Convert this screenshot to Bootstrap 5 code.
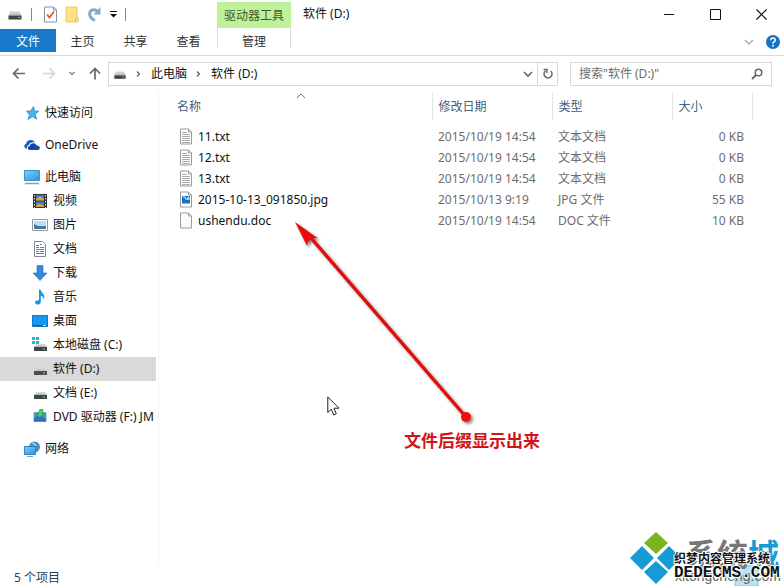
<!DOCTYPE html>
<html lang="zh-CN">
<head>
<meta charset="utf-8">
<meta name="viewport" content="width=device-width, initial-scale=1">
<title>软件 (D:)</title>
<link href="https://cdn.jsdelivr.net/npm/bootstrap@5.3.0/dist/css/bootstrap.min.css" rel="stylesheet">
<style>
body { font: 12px/20px "Noto Sans", "Noto Sans CJK SC", sans-serif; color: #111; background: #fff; }
svg { display: block; flex: none; }
button { border: 0; background: none; padding: 0; color: inherit; }
a { color: inherit; text-decoration: none; }
.titlebar { height: 28px; }
.quickbar { width: 217px; padding-left: 7px; }
.quickbar .sep { width: 1px; height: 13px; background: #888; }
.tool-head { width: 74px; background: #bff09a; color: #3f5b2c; margin-top: 2px; line-height: 28px; }
.win-btn { width: 46px; height: 28px; }
.ribbon { height: 28px; border-bottom: 1px solid #d9dadb; }
.ribbon a { height: 24px; line-height: 28px; width: 53px; text-align: center; color: #333; }
.ribbon .file-tab { width: 56px; height: 23px; margin-top: 1px; line-height: 25px; background: #1979ca; color: #fff; }
.ribbon .tool-tab { width: 74px; margin-left: 2px; height: 20px; border: solid #dcdcdc; border-width: 0 1px; }
.addressbar { padding: 6px 12px 0 12px; }
.nav-keys { width: 96px; gap: 12px; }
.path-box, .search-box { height: 24px; border: 1px solid #d9d9d9; }
.search-box { width: 202px; margin-left: 12px; padding: 0 8px; }
.search-box input { border: 0; outline: 0; width: 100%; min-width: 0; padding: 0; color: #6d6d6d; background: none; }
.search-box input::placeholder { color: #6d6d6d; opacity: 1; }
.refresh { width: 20px; height: 22px; border-left: 1px solid #d9d9d9; }
.tree { width: 159px; padding-top: 9px; margin-top: 6px; border-right: 1px solid #f3f3f3; }
.tree a { height: 24px; margin-right: 2px; padding-left: 32px; gap: 5px; white-space: nowrap; overflow: hidden; }
.tree a.top-node { padding-left: 24px; gap: 5px; }
.tree a.top-node + a.top-node, .tree a.spaced { margin-top: 8px; }
.tree a.current { background: #d9d9d9; }
.files { table-layout: fixed; width: 100%; margin-top: 7px; }
.files th { font-weight: 400; color: #43607c; height: 27px; padding: 0 0 0 6px; border-right: 1px solid #e4e4e4; position: relative; }
.files th:last-child { border: 0; }
.files th:first-child { padding-left: 18px; }
.files td { height: 21px; padding: 0 0 0 6px; color: #6d6d6d; white-space: nowrap; line-height: 21px; }
.files td:first-child { color: #111; padding-left: 20px; }
.files tbody::before { content: ""; display: block; height: 6px; }
.files .file-name { display: flex; align-items: center; gap: 5px; }
.files .num { text-align: right; padding-right: 8px; }
.sort-mark { position: absolute; left: 137px; top: 0; }
.note-arrow { position: absolute; left: 127px; top: 125px; }
.note { position: absolute; left: 245px; top: 343px; font-size: 17px; line-height: 24px; font-weight: 700; color: #d0141a; }
.pointer { position: absolute; left: 168px; top: 310px; }
.status { height: 21px; padding-left: 14px; color: #2b3f5c; line-height: 21px; }
.brand-mark { position: absolute; right: 2px; bottom: 2px; width: 152px; height: 54px; }
</style>
<script src="https://cdn.jsdelivr.net/npm/bootstrap@5.3.0/dist/js/bootstrap.bundle.min.js"></script>
</head>
<body>
<svg width="0" height="0" class="position-absolute" aria-hidden="true">
  <defs>
    <linearGradient id="lidG" x2="0" y2="1"><stop stop-color="#e2e2e2"/><stop offset="1" stop-color="#b5b5b5"/></linearGradient>
    <linearGradient id="skyG" x2="1" y2="1"><stop stop-color="#7fd0fa"/><stop offset="1" stop-color="#2795dd"/></linearGradient>
    <symbol id="drive" viewBox="0 0 16 16"><path d="M3.500 5h9l2 4.500h-13z" fill="url(#lidG)"/><path d="M1.500 9.500h13v4h-13z" fill="#3e4545"/><path d="M11 11h2v1h-2z" fill="#5fe08a"/></symbol>
    <symbol id="txt" viewBox="0 0 14 17"><path d="M1.500 1h8l3 3v12h-11z" fill="#fff" stroke="#9b9b9b"/><path d="M9.500 1v3h3" fill="none" stroke="#9b9b9b"/><path d="M3 4.500h5M3 6.500h8M3 8.500h8M3 10.500h8M3 12.500h8M3 14.500h8" stroke="#aaa"/></symbol>
    <symbol id="chev" viewBox="0 0 8 8"><path d="M2 1.500l2.500 2.500L2 6.500" fill="none" stroke="#666" stroke-width="1.300"/></symbol>
  </defs>
</svg>
<div class="d-flex flex-column vh-100 position-relative overflow-hidden">
  <header>
    <div class="titlebar d-flex">
      <div class="quickbar d-flex align-items-center">
        <svg width="16" height="16"><use href="#drive"/></svg>
        <span class="sep ms-2"></span>
        <button type="button" class="ms-2 ps-1" aria-label="属性"><svg width="13" height="17" viewBox="0 0 13 17"><path d="M.5 1h9l3 3v12H.5z" fill="#fff" stroke="#8292a8"/><path d="M9.500 1v3h3" fill="none" stroke="#8292a8"/><path d="M3 8.500l2.500 3 4.500-6" fill="none" stroke="#e2582e" stroke-width="1.800"/></svg></button>
        <button type="button" class="ms-2" aria-label="新建文件夹"><svg width="14" height="17" viewBox="0 0 14 17"><path d="M1 1h11v10h1v5H1z" fill="#ffe18a" stroke="#efc95d"/><path d="M10.500 12v4" stroke="#e3b848"/></svg></button>
        <button type="button" class="ms-2" aria-label="恢复"><svg width="15" height="16" viewBox="0 0 15 16"><path d="M8 14.500C3.500 12.500 1.500 9 3 6c1.500-3 5-3 8-.5" fill="none" stroke="#8ba5c4" stroke-width="3"/><path d="M13.500 1v7.500H6.500z" fill="#8ba5c4"/></svg></button>
        <button type="button" class="ms-2" aria-label="自定义"><svg width="7" height="8" viewBox="0 0 7 8"><path d="M0 1.500h7" stroke="#111"/><path d="M0 4h7L3.500 7.500z" fill="#111"/></svg></button>
        <span class="sep ms-2"></span>
      </div>
      <div class="tool-head text-center">驱动器工具</div>
      <div class="flex-fill pt-1 ps-2 ms-1">软件 (D:)</div>
      <button type="button" class="win-btn" aria-label="最小化"><svg class="mx-auto" width="10" height="11"><path d="M0 5.500h10" stroke="#111"/></svg></button>
      <button type="button" class="win-btn" aria-label="最大化"><svg class="mx-auto" width="11" height="11"><path d="M.5.500h10v10H.5z" fill="none" stroke="#111"/></svg></button>
      <button type="button" class="win-btn" aria-label="关闭"><svg class="mx-auto" width="11" height="11"><path d="M.5.500l10 10M10.500.5l-10 10" stroke="#111" stroke-width="1.200"/></svg></button>
    </div>
    <nav class="ribbon d-flex" aria-label="功能区">
      <a href="#" class="file-tab">文件</a>
      <a href="#">主页</a>
      <a href="#">共享</a>
      <a href="#">查看</a>
      <a href="#" class="tool-tab">管理</a>
      <div class="ms-auto me-1 d-flex align-items-center gap-2">
        <button type="button" aria-label="展开功能区"><svg width="10" height="8" viewBox="0 0 10 8"><path d="M1 2l4 4 4-4" fill="none" stroke="#aaa" stroke-width="1.300"/></svg></button>
        <button type="button" class="ms-1" aria-label="帮助"><svg width="14" height="14" viewBox="0 0 14 14"><circle cx="7" cy="7" r="7" fill="#1671c4"/><path d="M4.800 5.300c0-3 4.500-2.800 4.500-.3C9.300 6.700 7 6.600 7 8.800" fill="none" stroke="#fff" stroke-width="1.500"/><circle cx="7" cy="10.800" r="1" fill="#fff"/></svg></button>
      </div>
    </nav>
  </header>
  <div class="addressbar d-flex">
    <div class="nav-keys d-flex align-items-center">
      <button type="button" aria-label="后退"><svg width="14" height="14" viewBox="0 0 14 14"><path d="M13 6.500H2M6.500 1.500l-5 5 5 5" fill="none" stroke="#666" stroke-width="1.700"/></svg></button>
      <button type="button" class="ms-1" aria-label="前进"><svg width="14" height="14" viewBox="0 0 14 14"><path d="M1 6.500h11M7.500 1.500l5 5-5 5" fill="none" stroke="#d4d4d4" stroke-width="1.500"/></svg></button>
      <button type="button" aria-label="最近位置"><svg width="8" height="8" viewBox="0 0 8 8"><path d="M1.500 2l2.500 2.500L6.500 2" fill="none" stroke="#888" stroke-width="1.500"/></svg></button>
      <button type="button" aria-label="上移"><svg width="14" height="14" viewBox="0 0 14 14"><path d="M7 12.500V2M2 6.500l5-5 5 5" fill="none" stroke="#666" stroke-width="1.700"/></svg></button>
    </div>
    <div class="path-box d-flex align-items-center flex-fill ps-1">
      <svg width="14" height="16"><use href="#drive"/></svg>
      <svg class="mx-2" width="8" height="8"><use href="#chev"/></svg>
      <a href="#">此电脑</a>
      <svg class="mx-2" width="8" height="8"><use href="#chev"/></svg>
      <a href="#">软件 (D:)</a>
      <button type="button" class="ms-auto me-1" aria-label="以前的位置"><svg width="10" height="8" viewBox="0 0 10 8"><path d="M1 2l4 4 4-4" fill="none" stroke="#666" stroke-width="1.700"/></svg></button>
      <button type="button" class="refresh" aria-label="刷新"><svg class="mx-auto" width="12" height="12" viewBox="0 0 12 12"><path d="M3.500 2.800A4 4 0 1 0 8.800 3" fill="none" stroke="#666" stroke-width="1.500"/><path d="M1.500 1.500H5V5" fill="none" stroke="#666" stroke-width="1.400"/></svg></button>
    </div>
    <label class="search-box d-flex align-items-center">
      <input type="search" placeholder="搜索&quot;软件 (D:)&quot;" aria-label="搜索">
      <svg width="12" height="12" viewBox="0 0 12 12"><circle cx="7.500" cy="4.500" r="3.300" fill="none" stroke="#666" stroke-width="1.500"/><path d="M5 7L1 11" stroke="#666" stroke-width="1.800"/></svg>
    </label>
  </div>
  <div class="d-flex flex-fill">
    <nav class="tree flex-shrink-0" aria-label="导航窗格">
      <a href="#" class="top-node d-flex align-items-center"><svg width="16" height="16" viewBox="0 0 16 16"><path d="M9.500 1.500l1 4.500 4.200.2-3.500 2.900 1.300 4.900-4-2.500L4 14.500l1.500-5L2.500 6.200l4.300-.2z" fill="#4ab4f0" stroke="#2381c3" stroke-width=".8"/></svg>快速访问</a>
      <a href="#" class="top-node d-flex align-items-center"><svg width="16" height="16" viewBox="0 0 16 16"><path d="M3 11.500C-.5 11.500-.5 7.500 2 7c.5-4.500 7-5.500 9-1.500C7 4.500 5 6.500 5 8 3 8.500 2.500 10 3 11.500z" fill="#1260b5"/><path d="M6 13c-3 0-3-3.800-.3-4 .5-3.500 6-3.500 6.800-.5 4 0 4.500 4.500 1 4.500z" fill="#0b4ba5"/></svg>OneDrive</a>
      <a href="#" class="top-node d-flex align-items-center"><svg width="16" height="16" viewBox="0 0 16 16"><path d="M.5 1.500h15v10H.5z" fill="url(#skyG)" stroke="#3b8fc2"/><path d="M1 14.500h14" stroke="#8aa0ae" stroke-width="1.500"/></svg>此电脑</a>
      <a href="#" class="d-flex align-items-center"><svg width="16" height="16" viewBox="0 0 16 16"><path d="M1 1h14v14H1z" fill="#333"/><path d="M4 2h8v5.500H4zM4 8.500h8V14H4z" fill="#4274d5"/><path d="M4 6l4-3 4 3v1.500H4zM4 12.500l3-2 5 2V14H4z" fill="#d7a545"/><path d="M2.500 2v13M13.500 2v13" stroke="#e9df9f" stroke-dasharray="1.500 1.500"/></svg>视频</a>
      <a href="#" class="d-flex align-items-center"><svg width="16" height="16" viewBox="0 0 16 16"><path d="M.5 2.500h15v11H.5z" fill="#fff" stroke="#9a9a9a"/><path d="M2 4h12v8H2z" fill="#b9e0f5"/><path d="M2 7l4 2h8v3H2z" fill="#47799c"/></svg>图片</a>
      <a href="#" class="d-flex align-items-center"><svg width="16" height="16" viewBox="0 0 16 16"><path d="M2.500.5h8l3 3v12h-11z" fill="#fff" stroke="#7a8a94"/><path d="M4 4.500h3M8 3.500h2M4 6.500h3M8 6.500h4M4 8.500h8M4 10.500h3M8 10.500h4M4 12.500h8" stroke="#2f92c0" stroke-width="1.200"/></svg>文档</a>
      <a href="#" class="d-flex align-items-center"><svg width="16" height="16" viewBox="0 0 16 16"><path d="M5 .5h6V8h4l-7 7.500L1 8h4z" fill="#3189da" stroke="#2472bc" stroke-width=".6"/></svg>下载</a>
      <a href="#" class="d-flex align-items-center"><svg width="16" height="16" viewBox="0 0 16 16"><path d="M7 .5h1.500C9 4 13.500 4.500 12 10.500c-1-3-2-3.500-3.200-4V13c0 3-5.300 3.500-5.600.8C3 12 5 11 7 11.500z" fill="#1794e4"/></svg>音乐</a>
      <a href="#" class="d-flex align-items-center"><svg width="16" height="16" viewBox="0 0 16 16"><path d="M.5 2.500h15v11H.5z" fill="#1498f0" stroke="#1677bd"/><path d="M1 12.500h14" stroke="#0d5f9f"/><path d="M11 12.500h3" stroke="#b8e2ff"/></svg>桌面</a>
      <a href="#" class="d-flex align-items-center"><svg width="16" height="16" viewBox="0 0 16 16"><path d="M4 7h9l2 3H2z" fill="url(#lidG)"/><path d="M0 0h3v3H0zM4 0h3v3H4zM0 4h3v3H0zM4 4h3v3H4z" fill="#22bcd4"/><path d="M2 10h13v4H2z" fill="#3e4545"/><path d="M11 12h2" stroke="#5fe08a"/></svg>本地磁盘 (C:)</a>
      <a href="#" class="current d-flex align-items-center" aria-current="page"><svg width="16" height="16" viewBox="0 0 16 16"><path d="M4 8h9l2 2H2z" fill="#c8c8c8"/><path d="M2 10h13v4H2z" fill="#4a5050"/><path d="M11 12h2" stroke="#5fe08a"/></svg>软件 (D:)</a>
      <a href="#" class="d-flex align-items-center"><svg width="16" height="16" viewBox="0 0 16 16"><path d="M4 7h9l2 3H2z" fill="url(#lidG)"/><path d="M2 10h13v4H2z" fill="#3e4545"/><path d="M11 12h2" stroke="#5fe08a"/></svg>文档 (E:)</a>
      <a href="#" class="d-flex align-items-center"><svg width="16" height="16" viewBox="0 0 16 16"><path d="M2 3.500h12v9H2z" fill="#4b8fd6" stroke="#7fa3c9"/><path d="M2 9l5-3 7 4v2.500H2z" fill="#3070b8"/><path d="M8 0l3 .5-.5 4h2L7.500 8.500 4.500 4.500h2z" fill="#3bd65d" stroke="#1f9b40" stroke-width=".6"/></svg>DVD 驱动器 (F:) JM</a>
      <a href="#" class="top-node spaced d-flex align-items-center"><svg width="16" height="16" viewBox="0 0 16 16"><circle cx="10.500" cy="6" r="5.500" fill="#4d8fc4"/><path d="M8 2c2 1 3 0 4 3" stroke="#b3dcf3" stroke-width="1.300" fill="none"/><path d="M.5 5.500h11v8H.5z" fill="url(#skyG)" stroke="#2d83bd"/><path d="M3 15.500h6" stroke="#6da7ce"/></svg>网络</a>
    </nav>
    <main class="flex-fill position-relative">
      <table class="files">
        <colgroup><col width="273"><col width="120"><col width="120"><col width="80"><col></colgroup>
        <thead><tr><th scope="col">名称<svg class="sort-mark" width="10" height="6" viewBox="0 0 10 6"><path d="M1 5l4-4 4 4" fill="none" stroke="#777"/></svg></th><th scope="col">修改日期</th><th scope="col">类型</th><th scope="col">大小</th><th></th></tr></thead>
        <tbody>
          <tr><td><div class="file-name"><svg width="14" height="17"><use href="#txt"/></svg>11.txt</div></td><td>2015/10/19 14:54</td><td>文本文档</td><td class="num">0 KB</td><td></td></tr>
          <tr><td><div class="file-name"><svg width="14" height="17"><use href="#txt"/></svg>12.txt</div></td><td>2015/10/19 14:54</td><td>文本文档</td><td class="num">0 KB</td><td></td></tr>
          <tr><td><div class="file-name"><svg width="14" height="17"><use href="#txt"/></svg>13.txt</div></td><td>2015/10/19 14:54</td><td>文本文档</td><td class="num">0 KB</td><td></td></tr>
          <tr><td><div class="file-name"><svg width="14" height="17" viewBox="0 0 14 17"><path d="M1.500 1h8l3 3v12h-11z" fill="#fff" stroke="#9b9b9b"/><path d="M9.500 1v3h3" fill="none" stroke="#9b9b9b"/><path d="M3 5h8v7.500H3z" fill="#1473c5"/><path d="M4 6h2l1 2.500 1-1 1 1.500V6h1v3" fill="none" stroke="#d7eefc"/></svg>2015-10-13_091850.jpg</div></td><td>2015/10/13 9:19</td><td>JPG 文件</td><td class="num">55 KB</td><td></td></tr>
          <tr><td><div class="file-name"><svg width="14" height="17" viewBox="0 0 14 17"><path d="M1.500 1h8l3 3v12h-11z" fill="#fafafa" stroke="#9b9b9b"/><path d="M9.500 1v3h3" fill="none" stroke="#9b9b9b"/></svg>ushendu.doc</div></td><td>2015/10/19 14:54</td><td>DOC 文件</td><td class="num">10 KB</td><td></td></tr>
        </tbody>
      </table>
      <svg class="note-arrow" width="200" height="220" viewBox="0 0 200 220">
        <defs><filter id="soft" x="-10%" y="-10%" width="120%" height="120%"><feDropShadow dx="2" dy="2" stdDeviation="1.500" flood-color="#333" flood-opacity=".6"/></filter></defs>
        <g filter="url(#soft)"><path d="M25 27L180 206" stroke="#e01010" stroke-width="3.400"/><path d="M9 11l22.500 16-5 .5-4.500 3.500-1 4z" fill="#e81010"/><circle cx="180" cy="206" r="5" fill="#f01010"/></g>
      </svg>
      <div class="note">文件后缀显示出来</div>
      <svg class="pointer" width="13" height="20" viewBox="0 0 13 20"><path d="M.8 1v15.500l3.500-3.300 2.400 5.800 2.600-1.100L7 12.200h5z" fill="#fff" stroke="#222"/></svg>
    </main>
  </div>
  <footer class="status">5 个项目</footer>
  <svg class="brand-mark" viewBox="0 0 152 54" role="img" aria-label="系统城">
    <path d="M26 0l12 11-12 11-12-11z" fill="#7ab51d"/><path d="M12 14l12 12-12 12L0 26zM39 14l12 12-12 12-12-12zM26 29l12 11-12 12-12-12z" fill="#169bd5"/>
    <path d="M105 34h23v20h-23z" fill="#bfe3f6" stroke="#7fc0e4"/>
    <g font-family="Noto Sans CJK SC, sans-serif">
      <text x="56" y="34" font-size="31" font-weight="700" fill="#777">系统<tspan fill="#169bd5">城</tspan></text>
      <text x="45" y="49" font-family="Liberation Sans, sans-serif" font-size="14" fill="#666">xitongcheng.com</text>
      <g font-weight="700" fill="#111" stroke="#fff" stroke-width="2" stroke-linejoin="round" paint-order="stroke">
        <text x="44" y="31" font-size="12">织梦内容管理系统</text>
        <text x="44" y="45" font-family="Liberation Mono, monospace" font-size="16">DEDECMS.COM</text>
      </g>
    </g>
  </svg>
</div>
</body>
</html>
